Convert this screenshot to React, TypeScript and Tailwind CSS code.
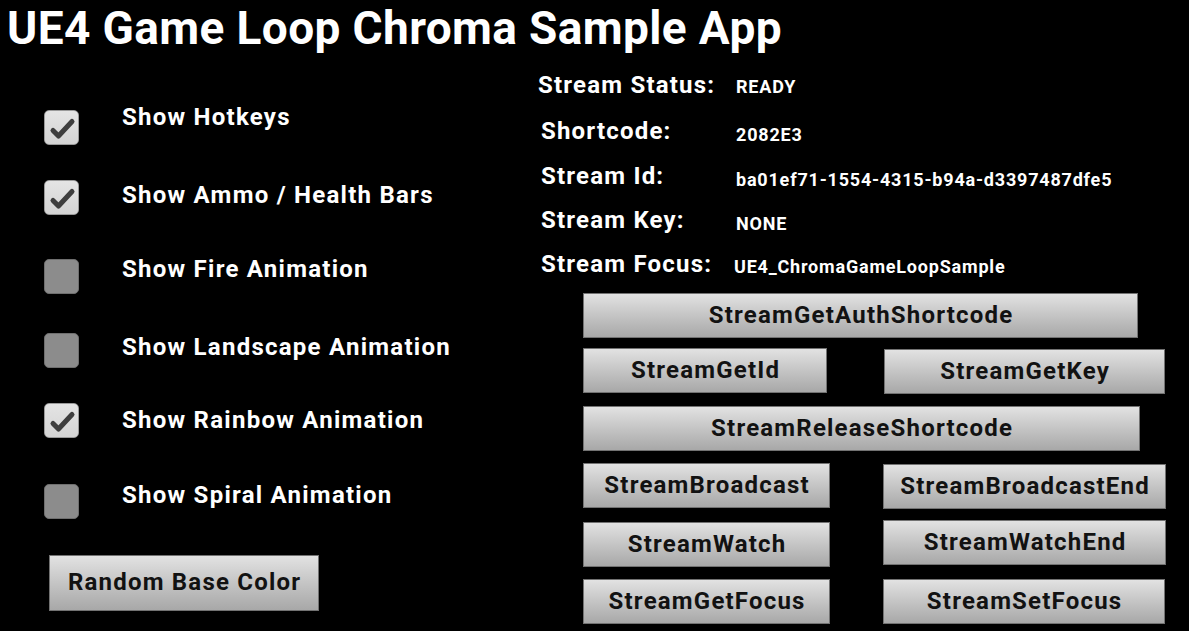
import React from "react";

const toggles = [
  { label: "Show Hotkeys", checked: true, row: "h-[78px]", box: "mt-[8px]", text: "mt-0" },
  { label: "Show Ammo / Health Bars", checked: true, row: "h-[74px]", box: "mt-0", text: "mt-0" },
  { label: "Show Fire Animation", checked: false, row: "h-[78px]", box: "mt-[5px]", text: "mt-0" },
  { label: "Show Landscape Animation", checked: false, row: "h-[71px]", box: "mt-[1px]", text: "mt-0" },
  { label: "Show Rainbow Animation", checked: true, row: "h-[77px]", box: "mt-0", text: "mt-[2px]" },
  { label: "Show Spiral Animation", checked: false, row: "h-[75px]", box: "mt-[4px]", text: "mt-0" },
];

const info = [
  { label: "Stream Status:", value: "READY", row: "h-[46px]", lx: "ml-0", vx: "ml-[198px]", vy: "mt-[2px]" },
  { label: "Shortcode:", value: "2082E3", row: "h-[45px]", lx: "ml-[3px]", vx: "ml-[195px]", vy: "mt-[4px]" },
  { label: "Stream Id:", value: "ba01ef71-1554-4315-b94a-d3397487dfe5", row: "h-[44px]", lx: "ml-[3px]", vx: "ml-[195px]", vy: "mt-[4px]" },
  { label: "Stream Key:", value: "NONE", row: "h-[44px]", lx: "ml-[3px]", vx: "ml-[195px]", vy: "mt-[4px]" },
  { label: "Stream Focus:", value: "UE4_ChromaGameLoopSample", row: "h-[30px]", lx: "ml-[3px]", vx: "ml-[193px]", vy: "mt-[3px]" },
];

const Check = () => (
  <svg width="35" height="35" viewBox="0 0 35 35" className="block">
    <path
      d="M8 19.5 L13.5 25 L27 10.5"
      fill="none"
      stroke="#3e3e3e"
      strokeWidth="5"
      strokeLinecap="round"
      strokeLinejoin="round"
    />
  </svg>
);

const Checkbox = ({ checked }: { checked: boolean }) => (
  <div
    className={
      checked
        ? "w-[35px] h-[35px] rounded-[5px] border border-[#9a9a9a] bg-gradient-to-b from-[#e4e4e4] to-[#d4d4d4] shrink-0"
        : "w-[35px] h-[35px] rounded-[5px] border border-[#6f6f6f] bg-[#8c8c8c] shrink-0"
    }
  >
    {checked && <Check />}
  </div>
);

const GrayButton = ({ label, className }: { label: string; className: string }) => (
  <button
    className={
      "flex items-center justify-center border border-[#727272] bg-gradient-to-b from-[#e2e2e2] to-[#a8a8a8] text-[24px] font-bold tracking-[1.2px] text-[#121212] leading-none " +
      className
    }
  >
    <span className="mr-[-1.2px] mt-[-2px]">{label}</span>
  </button>
);

export default function App() {
  return (
    <div
      className="w-[1189px] h-[631px] bg-black text-white overflow-hidden"
      style={{ fontFamily: "Roboto, 'Open Sans', sans-serif" }}
    >
      <h1 className="h-[60px] pl-[7px] pt-[5px] text-[46px] leading-[46px] font-bold tracking-[0.38px]">
        UE4 Game Loop Chroma Sample App
      </h1>

      <div className="flex">
        {/* left column: toggles */}
        <div className="w-[538px] shrink-0 pt-[42px] pl-[44px]">
          {toggles.map((t) => (
            <div key={t.label} className={"flex items-start " + t.row}>
              <div className={t.box}>
                <Checkbox checked={t.checked} />
              </div>
              <span className={"ml-[43px] text-[24px] leading-[30px] font-bold tracking-[1.25px] " + t.text}>
                {t.label}
              </span>
            </div>
          ))}
          <GrayButton label="Random Base Color" className="ml-[5px] w-[270px] h-[56px]" />
        </div>

        {/* right column: stream info + actions */}
        <div className="flex-1 pt-[10px]">
          {info.map((r) => (
            <div key={r.label} className={"flex items-start " + r.row}>
              <span className={"w-0 whitespace-nowrap text-[24px] leading-[30px] font-bold tracking-[1.2px] " + r.lx}>
                {r.label}
              </span>
              <span
                className={"whitespace-nowrap text-[18px] leading-[30px] font-bold tracking-[0.8px] " + r.vx + " " + r.vy}
              >
                {r.value}
              </span>
            </div>
          ))}

          <div className="pl-[45px] pt-[14px]">
            <GrayButton label="StreamGetAuthShortcode" className="w-[555px] h-[45px]" />

            <div className="flex items-start mt-[10px]">
              <GrayButton label="StreamGetId" className="w-[244px] h-[45px]" />
              <GrayButton label="StreamGetKey" className="ml-[57px] mt-[1px] w-[281px] h-[45px]" />
            </div>

            <GrayButton label="StreamReleaseShortcode" className="mt-[12px] w-[557px] h-[45px]" />

            <div className="flex items-start mt-[12px]">
              <GrayButton label="StreamBroadcast" className="w-[247px] h-[45px]" />
              <GrayButton label="StreamBroadcastEnd" className="ml-[53px] mt-[1px] w-[283px] h-[45px]" />
            </div>

            <div className="flex items-start mt-[11px]">
              <GrayButton label="StreamWatch" className="mt-[2px] w-[247px] h-[45px]" />
              <GrayButton label="StreamWatchEnd" className="ml-[53px] w-[283px] h-[45px]" />
            </div>

            <div className="flex items-start mt-[12px]">
              <GrayButton label="StreamGetFocus" className="w-[247px] h-[45px]" />
              <GrayButton label="StreamSetFocus" className="ml-[53px] w-[282px] h-[45px]" />
            </div>
          </div>
        </div>
      </div>
    </div>
  );
}
